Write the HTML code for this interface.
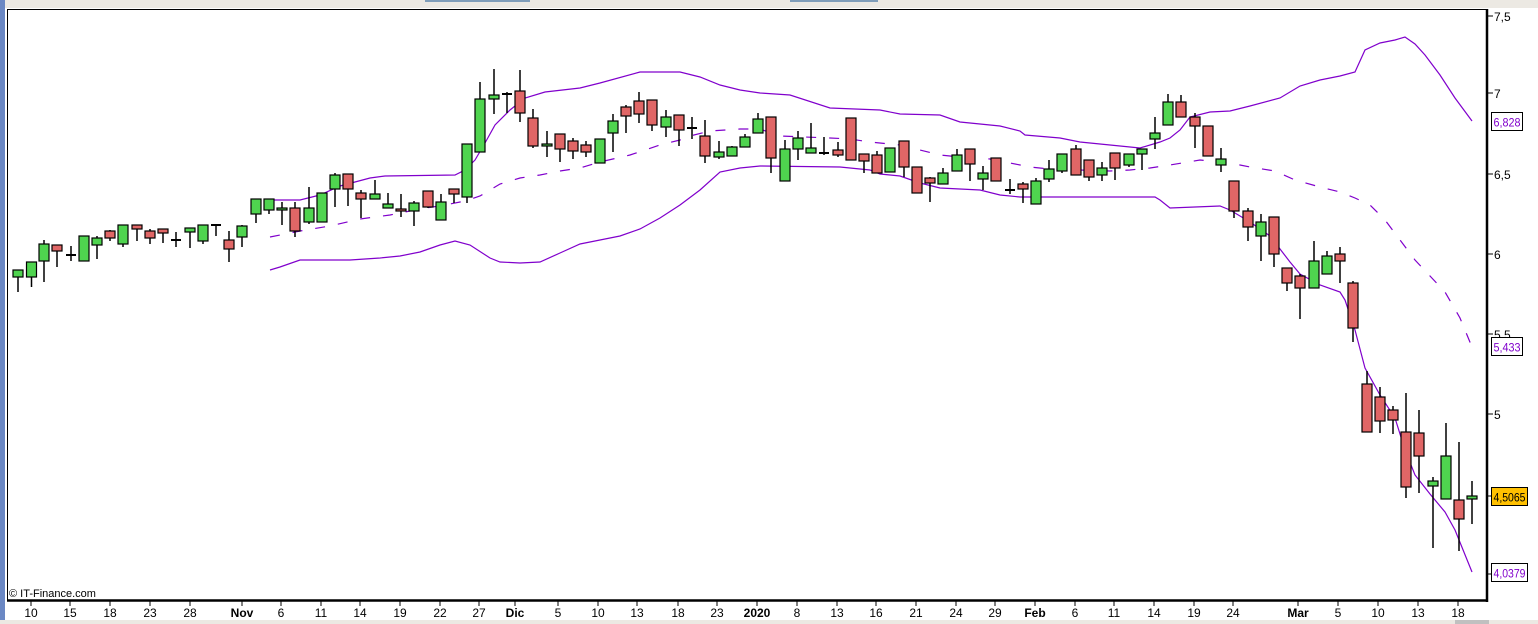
<!DOCTYPE html>
<html><head><meta charset="utf-8"><style>
html,body{margin:0;padding:0;background:#fff;overflow:hidden}
body{width:1538px;height:624px;position:relative;font-family:"Liberation Sans",sans-serif}
svg{position:absolute;left:0;top:0}
</style></head><body>
<svg id="s" width="1538" height="624" xmlns="http://www.w3.org/2000/svg" font-family="Liberation Sans, sans-serif">
<rect x="0" y="0" width="1538" height="624" fill="#fff"/>
<rect x="0" y="0" width="1538" height="8" fill="#ece9e3"/>
<rect x="425" y="0" width="105" height="2" fill="#7f9db9"/>
<rect x="790" y="0" width="88" height="2" fill="#7f9db9"/>
<rect x="0" y="0" width="5" height="624" fill="#6b88c4"/>
<rect x="0" y="620" width="1538" height="4" fill="#ece9e3"/>
<rect x="1455" y="620" width="34" height="4" fill="#c0c0c0"/>
<g id="g"></g>
</svg>
<script>
var C=[[18,270,292,270,277,1],[31.5,262,287,262,277,1],[44,240,282,244,261,1],[57,245,267,245,251,0],[71,246,261,255,255,2],[84,236,261,236,261,1],[97,236,259,238,245,1],[110,230,241,231,238,0],[123,225,247,225,244,1],[137,225,241,225,229,0],[150,229,244,231,238,0],[163,229,243,229,233,0],[176,232,247,240,240,2],[190,228,248,228,232,1],[203,225,244,225,241,1],[216,225,236,225,225,2],[229,231,262,240,249,0],[242,225,247,226,237,1],[256,199,223,199,214,1],[269,199,214,199,210,1],[282,202,225,208,210,1],[295,202,237,208,231,0],[309,187,224,208,222,1],[322,193,222,193,222,1],[335,173,207,175,189,1],[348,174,206,174,189,0],[361,190,218,193,199,0],[375,180,199,194,199,1],[388,193,208,204,208,1],[401,194,217,209,211,0],[414,201,226,203,211,1],[428,191,208,191,207,0],[441,194,220,202,220,1],[454,189,203,189,194,0],[467,144,203,144,197,1],[480,82,152,99,152,1],[494,69,114,95,99,1],[507,92,113,94,94,2],[520,70,122,91,113,0],[533,109,148,118,146,0],[547,131,157,144,146,1],[560,134,162,134,149,0],[573,138,159,141,151,0],[586,141,157,145,152,0],[600,139,163,139,163,1],[613,114,152,121,133,1],[626,105,133,107,116,0],[639,92,123,101,114,0],[652,100,131,100,125,0],[666,110,137,117,127,1],[679,115,146,115,130,0],[692,117,139,128,128,2],[705,120,163,136,156,0],[719,141,159,152,157,1],[732,146,156,147,156,1],[745,134,147,137,147,1],[758,113,133,119,133,1],[771,117,173,117,158,0],[785,140,181,149,181,1],[798,131,160,138,149,1],[811,123,153,148,153,1],[824,137,155,153,153,2],[838,142,157,150,155,0],[851,118,160,118,160,0],[864,154,173,154,161,0],[877,151,173,155,173,0],[890,148,172,148,172,1],[904,141,177,141,167,0],[917,167,193,167,193,0],[930,177,202,178,183,0],[943,168,184,173,184,1],[957,149,171,155,171,1],[970,149,181,149,164,0],[983,166,190,173,179,1],[996,158,181,158,181,0],[1010,179,194,190,190,2],[1023,182,203,184,189,0],[1036,178,204,181,204,1],[1049,160,182,169,179,1],[1062,154,173,154,171,1],[1076,145,175,149,175,0],[1089,160,181,160,177,0],[1102,162,181,168,175,1],[1115,153,180,153,168,0],[1129,154,167,154,165,1],[1142,149,170,149,154,1],[1155,117,149,133,139,1],[1168,94,125,102,125,1],[1181,95,117,102,117,0],[1195,113,148,117,126,0],[1208,126,156,126,156,0],[1221,148,172,159,165,1],[1234,181,218,181,211,0],[1248,208,241,211,227,0],[1261,214,261,222,236,1],[1274,217,267,217,254,0],[1287,268,291,268,283,0],[1300,274,319,276,288,0],[1314,241,288,261,288,1],[1327,251,274,256,274,1],[1340,247,283,254,261,0],[1353,281,342,283,328,0],[1367,371,432,384,432,0],[1380,387,433,397,421,0],[1393,406,434,410,420,0],[1406,393,498,432,487,0],[1419,410,493,433,456,0],[1433,477,548,481,486,1],[1446,423,499,456,499,1],[1459,442,551,500,519,0],[1472,481,524,496,499,1]];
var U=[[270,200],[300,200],[320,195],[340,186],[370,178],[385,176],[455,175],[465,170],[475,160],[485,143],[495,125],[510,110],[525,98],[545,92],[580,88],[600,83],[640,72],[680,72],[700,77],[720,85],[740,90],[760,93],[790,95],[830,108],[880,110],[900,114],[940,115],[960,122],[1000,126],[1020,131],[1025,135],[1060,138],[1080,142],[1100,144],[1140,148],[1160,142],[1170,138],[1180,130],[1190,117],[1210,112],[1230,111],[1250,106],[1280,98],[1300,86],[1320,80],[1340,76],[1355,72],[1365,50],[1380,43],[1395,40],[1405,37],[1415,44],[1425,55],[1440,75],[1455,98],[1472,121]];
var L=[[270,270],[280,267],[300,260],[350,260],[380,258],[400,256],[420,252],[440,245],[455,241],[470,245],[490,258],[500,262],[520,263],[540,262],[560,253],[580,244],[600,240],[620,236],[640,229],[660,218],[680,205],[700,190],[720,172],[740,168],[760,166],[840,167],[870,170],[880,174],[900,176],[920,183],[940,188],[980,190],[1000,195],[1020,197],[1155,197],[1160,200],[1170,208],[1220,206],[1230,210],[1250,222],[1270,236],[1290,262],[1300,274],[1320,285],[1340,292],[1345,300],[1355,330],[1365,368],[1380,395],[1395,418],[1405,450],[1415,475],[1430,494],[1445,512],[1455,530],[1472,572]];
var M=[[270,237],[300,231],[330,226],[360,219],[390,215],[420,209],[445,205],[465,201],[480,196],[490,190],[500,184],[520,178],[540,175],[560,171],[580,168],[600,162],[630,155],[660,145],[680,140],[690,136],[710,131],[740,129],[760,129],[780,136],[830,138],[850,139],[870,142],[900,145],[920,150],[940,155],[960,157],[990,159],[1010,163],[1030,167],[1050,169],[1110,171],[1130,170],[1150,168],[1170,165],[1200,160],[1230,163],[1250,167],[1275,171],[1295,180],[1320,187],[1340,192],[1355,198],[1370,205],[1385,220],[1400,240],[1415,260],[1430,276],[1445,292],[1460,318],[1472,347]];
function pts(a){return a.map(function(p){return p.join(',')}).join(' ')}
var h='';
h+='<polyline points="'+pts(U)+'" fill="none" stroke="#8000cc" stroke-width="1.2"/>';
h+='<polyline points="'+pts(L)+'" fill="none" stroke="#8000cc" stroke-width="1.2"/>';
h+='<polyline points="'+pts(M)+'" fill="none" stroke="#8000cc" stroke-width="1.2" stroke-dasharray="10,13"/>';
C.forEach(function(c){var x=c[0];
h+='<line x1="'+x+'" y1="'+c[1]+'" x2="'+x+'" y2="'+c[2]+'" stroke="#000" stroke-width="1.5"/>';
if(c[5]==2){h+='<rect x="'+(x-5)+'" y="'+(c[3]-1)+'" width="10" height="2" fill="#000"/>';}
else{var hh=Math.max(c[4]-c[3],2);h+='<rect x="'+(x-5)+'" y="'+c[3]+'" width="10" height="'+hh+'" fill="'+(c[5]?'#4fd44f':'#e06666')+'" stroke="#000" stroke-width="1.2"/>';}
});
h+='<line x1="7.5" y1="9" x2="7.5" y2="601" stroke="#000" stroke-width="1"/>';
h+='<line x1="7" y1="9.5" x2="1488" y2="9.5" stroke="#000" stroke-width="1"/>';
h+='<line x1="1487" y1="9" x2="1487" y2="602" stroke="#000" stroke-width="2.5"/>';
h+='<line x1="7" y1="600.5" x2="1488" y2="600.5" stroke="#000" stroke-width="2.5"/>';
[["7,5",16],["7",93],["6,5",174],["6",254],["5,5",334],["5",414]].forEach(function(t){
h+='<line x1="1488" y1="'+t[1]+'" x2="1493" y2="'+t[1]+'" stroke="#000"/>';
h+='<text x="1494" y="'+(t[1]+5)+'" font-size="12" fill="#000">'+t[0]+'</text>';});
[574,496].forEach(function(y){h+='<line x1="1488" y1="'+y+'" x2="1493" y2="'+y+'" stroke="#000"/>';});
function box(x,y,w,t,bg,col){h+='<rect x="'+x+'" y="'+y+'" width="'+w+'" height="18" fill="'+bg+'" stroke="#000"/><text x="'+(x+2)+'" y="'+(y+14)+'" font-size="12" fill="'+col+'" textLength="'+(w-4)+'" lengthAdjust="spacingAndGlyphs">'+t+'</text>';}
box(1491.5,112.5,31,"6,828","#fff","#8000cc");
box(1491.5,337.5,31,"5,433","#fff","#8000cc");
box(1491.5,487.5,36,"4,5065","#ffc000","#000");
box(1491.5,563.5,36,"4,0379","#fff","#8000cc");
[["10",31],["15",70],["18",110],["23",150],["28",190],["Nov",242,1],["6",281],["11",321],["14",360],["19",400],["22",440],["27",479],["Dic",515,1],["5",558],["10",598],["13",637],["18",678],["23",717],["2020",757,1],["8",797],["13",837],["16",876],["21",916],["24",956],["29",995],["Feb",1035,1],["6",1075],["11",1114],["14",1154],["19",1194],["24",1233],["Mar",1298,1],["5",1338],["10",1378],["13",1418],["18",1458]].forEach(function(t){
h+='<line x1="'+t[1]+'" y1="601" x2="'+t[1]+'" y2="606" stroke="#000"/>';
h+='<text x="'+t[1]+'" y="617" font-size="12" text-anchor="middle"'+(t[2]?' font-weight="bold"':'')+'>'+t[0]+'</text>';});
h+='<text x="9" y="597" font-size="11" fill="#000">© IT-Finance.com</text>';
document.getElementById('g').innerHTML=h;
</script>
</body></html>
